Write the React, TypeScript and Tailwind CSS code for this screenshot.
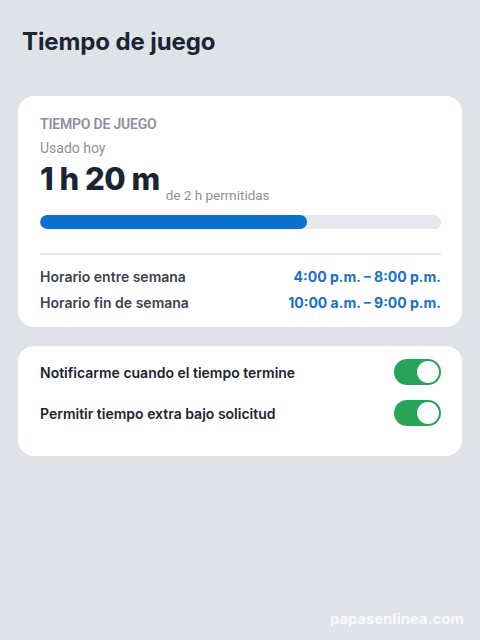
export default function App() {
  const used = 80;
  const total = 120;
  const pct = (used / total) * 100;
  return (
    <div
      className="relative w-[480px] h-[640px] bg-[#dfe3e8] px-[18px] pt-[28px] overflow-hidden"
      style={{ fontFamily: "Inter, 'Noto Sans', sans-serif" }}
    >
      <h1 className="pl-[4px] text-[24px] leading-[28px] font-bold text-[#1a2433] tracking-[-0.1px]">
        Tiempo de juego
      </h1>

      <div className="mt-[40px] bg-white rounded-[16px] pl-[22px] pr-[21px] pt-[19px] pb-[15px]">
        <div
          className="text-[14px] leading-[19px] font-semibold text-[#8a919b] tracking-[-0.2px]"
          style={{ fontFamily: "Roboto, sans-serif" }}
        >
          TIEMPO DE JUEGO
        </div>
        <div
          className="mt-[5px] text-[14px] leading-[18px] text-[#8a919b]"
          style={{ fontFamily: "Roboto, sans-serif" }}
        >
          Usado hoy
        </div>
        <div className="mt-[2px] flex items-baseline gap-[6px]">
          <span className="text-[31px] leading-[40px] font-extrabold text-[#1a2433] tracking-[-0.5px]">
            1 h 20 m
          </span>
          <span
            className="relative top-[10px] text-[13.5px] text-[#8a919b]"
            style={{ fontFamily: "Roboto, sans-serif" }}
          >
            de 2 h permitidas
          </span>
        </div>
        <div className="mt-[16px] h-[14px] rounded-full bg-[#e5e8ec] overflow-hidden">
          <div className="h-full rounded-full bg-[#0a6fd1]" style={{ width: `${pct}%` }} />
        </div>
        <div className="mt-[24px] h-[2px] bg-[#e7eaee]" />
        <div className="mt-[13px] flex flex-col gap-[8px] text-[14px] leading-[18px] font-semibold">
          <div className="flex justify-between">
            <span className="text-[#3a4352]">Horario entre semana</span>
            <span className="text-[#1670c9] font-bold">4:00 p.m. – 8:00 p.m.</span>
          </div>
          <div className="flex justify-between">
            <span className="text-[#3a4352]">Horario fin de semana</span>
            <span className="text-[#1670c9] font-bold">10:00 a.m. – 9:00 p.m.</span>
          </div>
        </div>
      </div>

      <div className="mt-[19px] bg-white rounded-[16px] pl-[22px] pr-[21px] pt-[13px] pb-[30px] flex flex-col gap-[15px]">
        {["Notificarme cuando el tiempo termine", "Permitir tiempo extra bajo solicitud"].map((t) => (
          <div key={t} className="flex items-center justify-between">
            <span className="text-[14px] font-semibold text-[#1a2433]">{t}</span>
            <div className="w-[47px] h-[26px] rounded-full bg-[#27a35a] flex items-center justify-end p-[2px]">
              <div className="w-[22px] h-[22px] rounded-full bg-white" />
            </div>
          </div>
        ))}
      </div>

      <div className="absolute right-[16px] bottom-[10px] text-[14.5px] font-bold text-white/80 tracking-[0.2px]">
        papasenlinea.com
      </div>
    </div>
  );
}
